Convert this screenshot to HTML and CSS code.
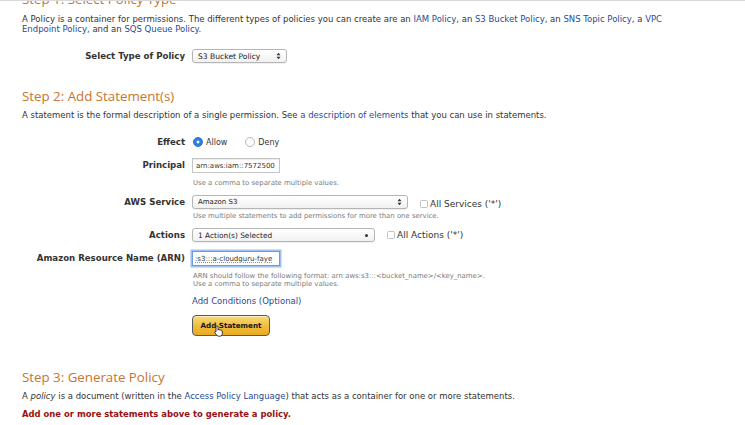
FILE: index.html
```html
<!DOCTYPE html>
<html lang="en">
<head>
<meta charset="utf-8">
<title>AWS Policy Generator</title>
<link rel="stylesheet" href="styles.css">
</head>
<body>
<div class="topline"></div>
<div class="page">
  <h2 class="step step1">Step 1: Select Policy Type</h2>
  <p class="intro first">A Policy is a container for permissions. The different types of policies you can create are an <a href="#">IAM Policy</a>, an <a href="#">S3 Bucket Policy</a>, an <a href="#">SNS Topic Policy</a>, a <a href="#">VPC Endpoint Policy</a>, and an <a href="#">SQS Queue Policy</a>.</p>

  <div class="row r-type">
    <div class="lbl">Select Type of Policy</div>
    <div class="ctl">
      <div class="select w-type"><span>S3 Bucket Policy</span>
        <svg class="arrows" width="5" height="8" viewBox="0 0 5 8"><path d="M0.5 3.2 L2.5 0.8 L4.5 3.2 Z M0.5 4.8 L2.5 7.2 L4.5 4.8 Z" fill="#333"/></svg>
      </div>
    </div>
  </div>

  <h2 class="step step2">Step 2: Add Statement(s)</h2>
  <p class="intro one">A statement is the formal description of a single permission. See <a href="#">a description of elements</a> that you can use in statements.</p>

  <div class="row r-effect">
    <div class="lbl">Effect</div>
    <div class="ctl radios">
      <span class="radio on"></span><span class="rtext">Allow</span>
      <span class="radio off"></span><span class="rtext">Deny</span>
    </div>
  </div>

  <div class="row r-principal">
    <div class="lbl">Principal</div>
    <div class="ctl col">
      <div class="input"><span>arn:aws:iam::7572500</span></div>
      <div class="hint h-principal">Use a comma to separate multiple values.</div>
    </div>
  </div>

  <div class="row r-service">
    <div class="lbl">AWS Service</div>
    <div class="ctl col">
      <div class="line">
        <div class="select w-service"><span>Amazon S3</span>
          <svg class="arrows" width="5" height="8" viewBox="0 0 5 8"><path d="M0.5 3.2 L2.5 0.8 L4.5 3.2 Z M0.5 4.8 L2.5 7.2 L4.5 4.8 Z" fill="#333"/></svg>
        </div>
        <label class="check c-service"><span class="box"></span>All Services ('*')</label>
      </div>
      <div class="hint h-service">Use multiple statements to add permissions for more than one service.</div>
    </div>
  </div>

  <div class="row r-actions">
    <div class="lbl">Actions</div>
    <div class="ctl">
      <div class="line">
        <div class="select w-actions"><span>1 Action(s) Selected</span><span class="dot"></span></div>
        <label class="check c-actions"><span class="box"></span>All Actions ('*')</label>
      </div>
    </div>
  </div>

  <div class="row r-arn">
    <div class="lbl">Amazon Resource Name (ARN)</div>
    <div class="ctl col">
      <div class="input focus"><span class="spell">:s3:::a-cloudguru-faye</span></div>
      <div class="hint h-arn">ARN should follow the following format: arn:aws:s3:::&lt;bucket_name&gt;/&lt;key_name&gt;.<br>Use a comma to separate multiple values.</div>
      <a href="#" class="cond">Add Conditions (Optional)</a>
      <div class="btnwrap">
        <button class="btn" type="button">Add Statement</button>
        <svg class="cursor" width="10" height="12" viewBox="0 0 10 12">
          <path d="M3 0.8 C3.6 0.8 4 1.2 4 1.8 L4 5.2 L4.3 4.6 C4.8 4.2 5.5 4.4 5.6 5 C6 4.6 6.8 4.8 6.9 5.4 C7.3 5.1 8.1 5.3 8.2 6 L8.3 8.6 C8.3 10 7.5 11.2 6 11.2 L4.6 11.2 C3.7 11.2 3.1 10.7 2.6 10 L0.9 7.6 C0.5 7 0.9 6.3 1.6 6.5 L2 6.9 L2 1.8 C2 1.2 2.4 0.8 3 0.8 Z" fill="#fff" stroke="#111" stroke-width="0.8"/>
        </svg>
      </div>
    </div>
  </div>

  <h2 class="step step3">Step 3: Generate Policy</h2>
  <p class="intro one gen">A <em>policy</em> is a document (written in the <a href="#">Access Policy Language</a>) that acts as a container for one or more statements.</p>
  <p class="warn">Add one or more statements above to generate a policy.</p>
</div>
</body>
</html>
```
FILE: styles.css
```css
html, body {
  margin: 0;
  padding: 0;
  background: #ffffff;
  overflow: hidden;
}
body {
  font-family: "DejaVu Sans", Verdana, sans-serif;
  color: #333333;
  font-size: 8px;
}
.topline {
  position: absolute;
  left: 0;
  top: 0;
  width: 100%;
  height: 1px;
  background: #d9d9d9;
}
.page {
  padding-left: 22px;
}
a {
  color: #1f4a96;
  text-decoration: none;
}
.step {
  font-family: "Open Sans", "DejaVu Sans", sans-serif;
  font-weight: 400;
  font-size: 13.3px;
  line-height: 16px;
  color: #c8742f;
  margin: 0;
}
.step1 { margin-top: -9px; }
.step2 { margin-top: 25px; }
.step3 { margin-top: 33px; }
.intro {
  margin: 6px 0 0 0;
  font-size: 8.5px;
  line-height: 10px;
  width: 650px;
}
.intro.first { margin-top: 7px; }
.warn {
  margin: 8px 0 0 0;
  font-size: 8.45px;
  line-height: 10px;
  font-weight: bold;
  color: #9a1010;
}
.row {
  display: flex;
  align-items: flex-start;
}
.lbl {
  width: 163px;
  padding-right: 7px;
  flex: none;
  text-align: right;
  font-weight: bold;
  font-size: 8.6px;
  color: #333;
  line-height: 14px;
}
.ctl {
  display: flex;
  align-items: center;
}
.ctl.col {
  flex-direction: column;
  align-items: flex-start;
}
.line {
  display: flex;
  align-items: center;
}
.r-type { margin-top: 15px; }
.r-effect { margin-top: 15px; }
.r-principal { margin-top: 9px; }
.r-principal .lbl { line-height: 15px; }
.r-service { margin-top: 8px; }
.r-actions { margin-top: 8px; }
.r-arn { margin-top: 9px; }
.r-arn .lbl { line-height: 15px; }

.select {
  box-sizing: border-box;
  height: 14px;
  border: 1px solid #b5b5b5;
  border-radius: 3px;
  background: linear-gradient(#ffffff, #f1f1f1);
  display: flex;
  align-items: center;
  justify-content: space-between;
  padding: 0 5px 0 5px;
  font-size: 7px;
  color: #222;
  box-shadow: 0 0.5px 0.5px rgba(0,0,0,0.12);
}
.w-type { width: 95px; }
.w-type span { font-size: 7.6px; }
.w-service { width: 216px; }
.w-actions { width: 183px; }
.w-actions span:first-child { font-size: 7.4px; }
.dot {
  width: 3px;
  height: 3px;
  border-radius: 50%;
  background: #333;
  margin-right: 1px;
}
.radios {
  height: 14px;
}
.radio {
  box-sizing: border-box;
  width: 10px;
  height: 10px;
  border-radius: 50%;
  flex: none;
}
.radio.on {
  margin-left: 1px;
  background: radial-gradient(circle, #ffffff 0 1.3px, #2f7fe0 1.7px);
  border: 1px solid #2a6fcc;
}
.radio.off {
  margin-left: 18px;
  border: 1px solid #b9b9b9;
  background: #fff;
}
.rtext {
  margin-left: 3px;
  font-size: 8px;
  color: #333;
}
.input {
  box-sizing: border-box;
  width: 88px;
  height: 15px;
  border: 1px solid #c4c4c4;
  background: #fff;
  display: flex;
  align-items: center;
  padding-left: 3px;
  font-size: 7px;
  color: #333;
  overflow: hidden;
  white-space: nowrap;
  box-shadow: inset 0 1px 1px rgba(0,0,0,0.08);
}
.input.focus {
  border: 1px solid #6a9be0;
  box-shadow: 0 0 0 1.5px #9ec1f2;
  padding-left: 2px;
}
.spell {
  text-decoration: underline dotted #e07070;
  text-decoration-thickness: 1px;
  text-underline-offset: 1px;
}
.hint {
  font-size: 6.9px;
  line-height: 8px;
  color: #7a7a7a;
  margin-left: 1px;
  white-space: nowrap;
}
.h-principal { margin-top: 6px; }
.h-service { margin-top: 3px; }
.h-arn { margin-top: 6px; }
.check {
  display: flex;
  align-items: center;
  font-size: 9px;
  color: #333;
}
.c-service { margin-left: 12px; margin-top: 3px; }
.c-actions { margin-left: 12px; }
.box {
  box-sizing: border-box;
  width: 8px;
  height: 8px;
  border: 1px solid #c2c2c2;
  border-radius: 1.5px;
  background: #fff;
  margin-right: 2px;
}
.cond {
  display: block;
  margin-top: 7px;
  line-height: 12px;
  font-size: 8.5px;
  color: #1f4a96;
}
.btnwrap {
  position: relative;
  margin-top: 8px;
}
.btn {
  box-sizing: border-box;
  width: 78px;
  height: 21px;
  border: 1px solid #555a5e;
  border-radius: 4px;
  background: linear-gradient(#f9da7c, #f0bd3a 55%, #e8aa22);
  box-shadow: inset 0 1px 0 rgba(255,255,255,0.55);
  font-family: "DejaVu Sans", Verdana, sans-serif;
  font-weight: bold;
  font-size: 7.2px;
  color: #1a1a1a;
  padding: 0;
}
.cursor {
  position: absolute;
  left: 22px;
  top: 10px;
}
```
